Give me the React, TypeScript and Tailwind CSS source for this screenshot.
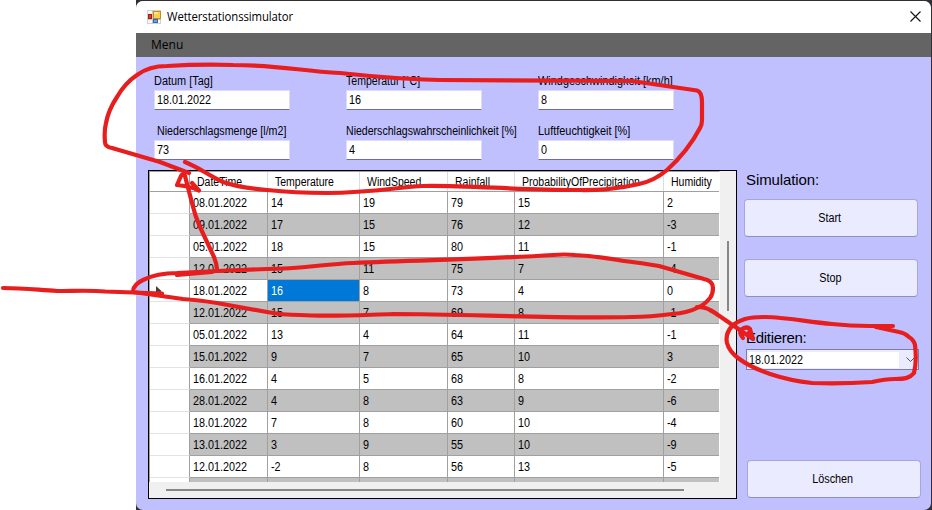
import React from "react";

const headers = [
  { name: "DateTime", width: "w-[78px]" },
  { name: "Temperature", width: "w-[92px]" },
  { name: "WindSpeed", width: "w-[88px]" },
  { name: "Rainfall", width: "w-[67px]" },
  { name: "ProbabilityOfPrecipitation", width: "w-[149px]" },
  { name: "Humidity", width: "w-[55px]" },
];

const rows: string[][] = [
  ["08.01.2022", "14", "19", "79", "15", "2"],
  ["09.01.2022", "17", "15", "76", "12", "-3"],
  ["05.01.2022", "18", "15", "80", "11", "-1"],
  ["12.01.2022", "15", "11", "75", "7", "-4"],
  ["18.01.2022", "16", "8", "73", "4", "0"],
  ["12.01.2022", "15", "7", "69", "8", "-1"],
  ["05.01.2022", "13", "4", "64", "11", "-1"],
  ["15.01.2022", "9", "7", "65", "10", "3"],
  ["16.01.2022", "4", "5", "68", "8", "-2"],
  ["28.01.2022", "4", "8", "63", "9", "-6"],
  ["18.01.2022", "7", "8", "60", "10", "-4"],
  ["13.01.2022", "3", "9", "55", "10", "-9"],
  ["12.01.2022", "-2", "8", "56", "13", "-5"],
  ["", "", "", "", "", ""],
];

const SELECTED = 4;

const fields = [
  { label: "Datum [Tag]", value: "18.01.2022", fit: "scale-x-[0.91]" },
  { label: "Temperatur [°C]", value: "16", fit: "scale-x-[0.88]" },
  { label: "Windgeschwindigkeit [km/h]", value: "8", fit: "scale-x-[0.91]" },
  { label: "Niederschlagsmenge [l/m2]", value: "73", fit: "scale-x-[0.89] ml-[3px]" },
  { label: "Niederschlagswahrscheinlichkeit [%]", value: "4", fit: "scale-x-[0.88]" },
  { label: "Luftfeuchtigkeit [%]", value: "0", fit: "scale-x-[0.91]" },
];

function AppIcon() {
  return (
    <svg width="14" height="14" viewBox="0 0 14 14" shapeRendering="crispEdges">
      <path d="M0.5 0.5h13v13h-13z" fill="#f8f8f8" stroke="#d2d2d2" />
      <path d="M0 4.500h6M5.500 0v14M0 9.500h14" stroke="#c8c8c8" />
      <rect x="6" y="1" width="8" height="8" fill="#c98d14" />
      <rect x="7" y="2" width="6" height="6" fill="#fdd04a" />
      <rect x="7" y="2" width="4" height="2" fill="#fee68c" />
      <rect x="1" y="4" width="4" height="5" fill="#a81c10" />
      <rect x="2" y="5" width="2" height="3" fill="#d8402c" />
      <rect x="6" y="9" width="5" height="4" fill="#2c68c8" />
      <rect x="7" y="10" width="3" height="2" fill="#6aa4f0" />
    </svg>
  );
}

function Button({ children, className = "" }: { children: string; className?: string }) {
  return (
    <button
      className={`block h-[38px] w-[174px] rounded-[4px] border border-[#a6a6dc] border-b-[#8f8fbc] bg-[#ebebff] pr-[2px] text-center text-[12px] leading-[36px] ${className}`}
    >
      <span className="inline-block scale-x-[0.9]">{children}</span>
    </button>
  );
}

function DataGrid() {
  return (
    <div className="flex h-[329px] w-[589px] flex-col border border-black bg-[#f0f0f0]">
      <div className="flex h-[311px]">
        <div className="w-[571px] overflow-hidden border-t border-r border-l border-[#a0a0a0] border-r-white bg-white">
          <div className="flex h-[20px] border-b border-[#a0a0a0]">
            <div className="w-[40px] shrink-0 border-r border-[#a0a0a0]" />
            {headers.map((h) => (
              <div
                key={h.name}
                className={`${h.width} shrink-0 border-r border-[#dcdcdc] pl-[7px] leading-[21px] whitespace-nowrap last:border-r-0`}
              >
                <span className="inline-block origin-left scale-x-[0.875]">{h.name}</span>
              </div>
            ))}
          </div>
          {rows.map((row, r) => (
            <div key={r} className="flex h-[22px]">
              <div className="flex w-[40px] shrink-0 items-center border-r border-b border-r-[#a0a0a0] border-b-[#e3e3e3] pl-[6px]">
                {r === SELECTED && (
                  <svg width="6" height="10" viewBox="0 0 6 10">
                    <path d="M0 0v10l5.5-5z" fill="#404040" />
                  </svg>
                )}
              </div>
              {row.map((cell, c) => (
                <div
                  key={c}
                  className={`${headers[c].width} shrink-0 border-r border-b border-[#a0a0a0] pl-[3px] leading-[22px] last:border-r-0 ${
                    r === SELECTED && c === 1
                      ? "bg-[#0078d7] text-white"
                      : r % 2
                        ? "bg-[#c0c0c0]"
                        : "bg-white"
                  }`}
                >
                  <span className="inline-block origin-left scale-x-[0.9]">{cell}</span>
                </div>
              ))}
            </div>
          ))}
        </div>
        <div className="flex-1 pt-[70px] pl-[7px]">
          <div className="h-[70px] w-[2px] bg-[#868686]" />
        </div>
      </div>
      <div className="pt-[7px] pl-[17px]">
        <div className="h-[2px] w-[518px] bg-[#868686]" />
      </div>
    </div>
  );
}

function Annotations() {
  return (
    <svg
      className="pointer-events-none absolute inset-0"
      width="932"
      height="510"
      viewBox="0 0 932 510"
      fill="none"
      stroke="#e81d1d"
      strokeWidth="4.2"
      strokeLinecap="round"
      strokeLinejoin="round"
    >
      <path d="M189 173L160 162L112 148Q105 147 105 142C104 132 105 127 106 123C108 112 111 106 117 97Q125 83 137 75Q149 66 167 66Q200 64 233 65C280 65 300 71 340 73Q395 79 440 80L632 81L697 90.5Q702 92 702 102V120Q702 125 700 128Q688 151 667 170Q654 181 639 184C610 191 590 190 575 190C520 190 460 185 423 186C400 187 370 193 327 193Q295 193 267 190Q240 188 223 182C208 175 200 168 185 162" />
      <path d="M217 270Q217 264 214 257L200 227Q195 216 192 203L185 176Q183 172 181 176L177 185Q189 186 199 190.500L192 183" />
      <path d="M3 288C25 288 38 290 57 291C75 291 90 290 105 291.500L162 293.500" />
      <path d="M133 291Q134 284 143 280C155 274 168 273 177 273L217 271L267 269C300 269 325 264 353 263C420 260 490 259 553 255Q565 254 575 255C600 256 620 261 640 263L659 266L704 279Q713 281 713 288Q713 294 710 298Q704 305 699 307Q688 313 672 314Q650 317 632 317C550 319 470 314 393 314C360 315 330 317 300 315Q282 315 267 312L217 303Q198 300 183 299L133 292M177 275L212 272" />
      <path d="M697 307Q705 307 710 310Q714 312 718 315L753 339M743 338Q738 332 742 329Q747 326 750 329L749 334L745 334M750 329L753 339" />
      <path d="M893 326H870Q850 326 832 324C808 322 785 317 765 317Q752 317 745 319Q736 322 732 326Q725 334 727 343Q729 351 738 358C755 371 784 380 812 383Q842 384 872 382Q885 379 895 379C905 379 910 378 914 373Q917 361 915 345Q914 340 909 337Q905 333 899 332L876 327" />
    </svg>
  );
}

export default function App() {
  return (
    <div className="relative h-[510px] w-[932px] overflow-hidden bg-white pl-[136px] font-['Liberation_Sans',Arial,sans-serif] text-[12px] text-black">
      <div className="h-[510px] w-[796px] bg-[#303034] pt-px pr-px">
        <div className="flex h-[509px] flex-col overflow-hidden rounded-[7px] bg-[#c0c0ff]">
          <header className="flex h-[32px] shrink-0 items-center bg-white pr-[10px] pb-px pl-[11px]">
            <AppIcon />
            <h1 className="ml-[6px] origin-left scale-x-[0.945] pt-px font-['Open_Sans',sans-serif] text-[12px] tracking-[-0.1px]">
              Wetterstationssimulator
            </h1>
            <svg className="ml-auto" width="11" height="11" viewBox="0 0 11 11">
              <path d="M0.500 0.500l10 10M10.500 0.500l-10 10" stroke="#111" strokeWidth="1.100" />
            </svg>
          </header>
          <nav className="h-[24px] shrink-0 bg-[#646464] pl-[15px] font-['Open_Sans',sans-serif] text-[12px] leading-[24px]">
            Menu
          </nav>
          <section className="grid h-[113px] shrink-0 grid-cols-[192px_192px_192px] grid-rows-[50px_50px] pt-[16px] pl-[18px]">
            {fields.map((f) => (
              <label key={f.label} className="block">
                <span className="block h-[17px] leading-[16px] whitespace-nowrap">
                  <span className={`inline-block origin-left ${f.fit}`}>{f.label}</span>
                </span>
                <span className="block h-[20px] w-[136px] border border-[#dcdcfa] border-b-[#6e6e96] bg-white pl-[2px] leading-[19px]">
                  <span className="inline-block origin-left scale-x-[0.9]">{f.value}</span>
                </span>
              </label>
            ))}
          </section>
          <main className="flex pl-[12px]">
            <DataGrid />
            <aside className="pl-[7px]">
              <h2 className="h-[29px] pl-[2px] text-[15px] leading-[20px] tracking-[-0.1px]">Simulation:</h2>
              <Button>Start</Button>
              <Button className="mt-[22px]">Stop</Button>
              <h2 className="mt-[31px] pl-[2px] text-[15px] leading-[20px] tracking-[-0.3px]">Editieren:</h2>
              <div className="mt-px ml-[2px] flex h-[21px] w-[173px] items-center border border-[#7d7da6] bg-[#ebebff]">
                <span className="ml-[2px] h-[16px] w-[150px] bg-white leading-[16px]">
                  <span className="inline-block origin-left scale-x-[0.9]">18.01.2022</span>
                </span>
                <svg className="ml-[7px]" width="9" height="5" viewBox="0 0 9 5">
                  <path d="M0.500 0.500l4 4l4-4" fill="none" stroke="#555" />
                </svg>
              </div>
              <Button className="mt-[90px] ml-[3px]">Löschen</Button>
            </aside>
          </main>
        </div>
      </div>
      <Annotations />
    </div>
  );
}
